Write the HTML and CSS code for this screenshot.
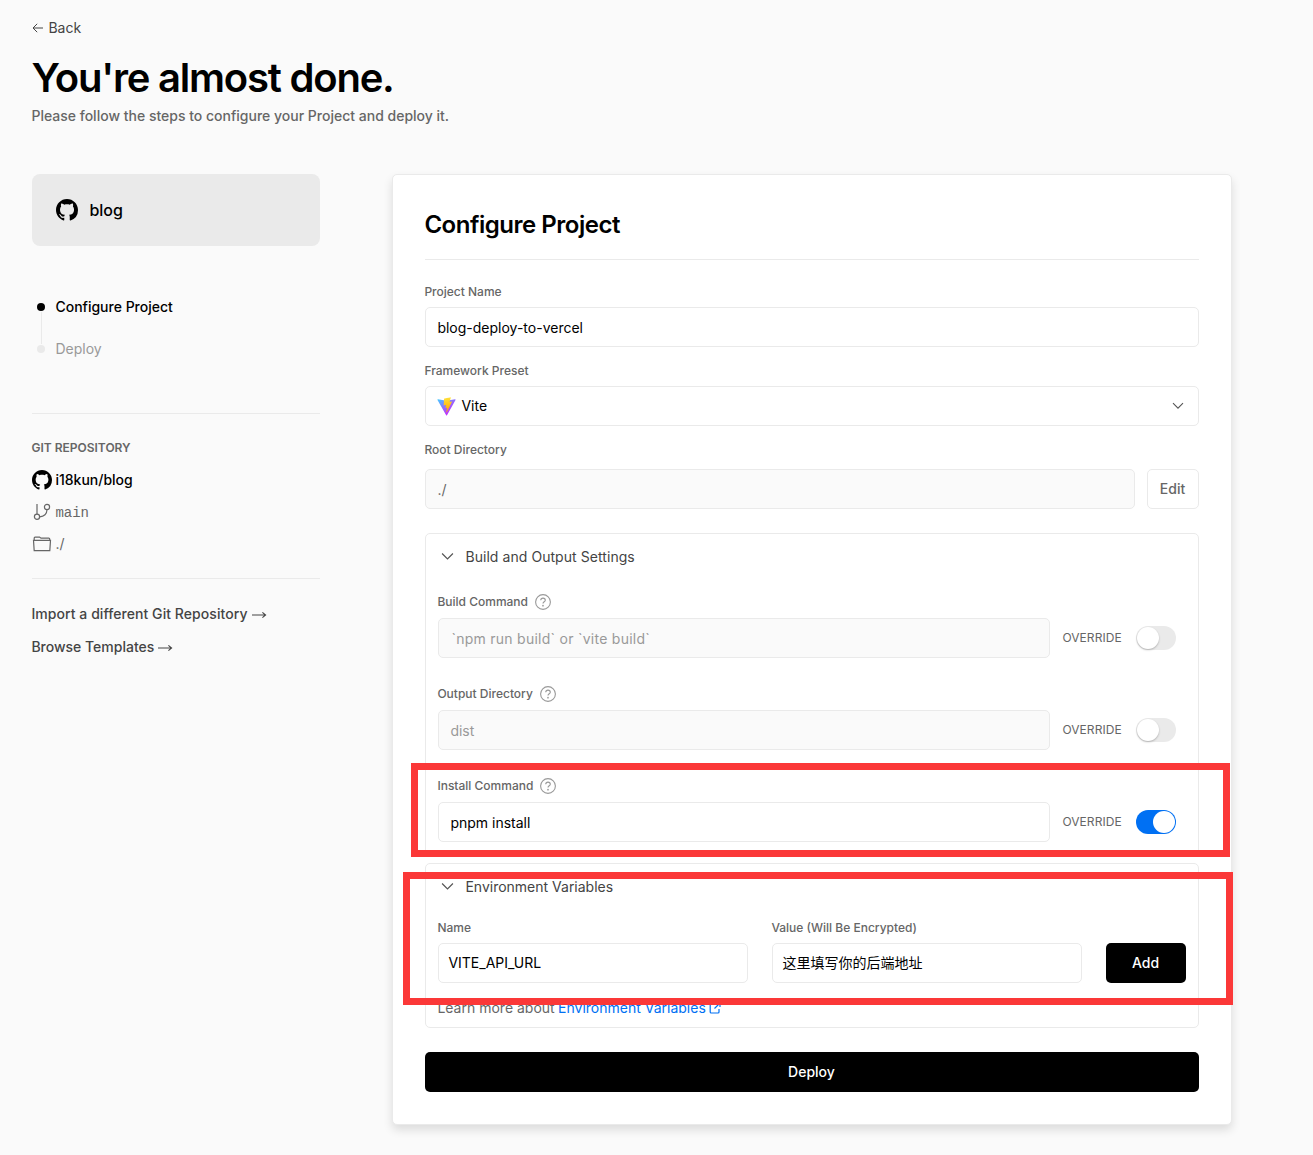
FILE: index.html
```html
<!DOCTYPE html>
<html lang="en">
<head>
<meta charset="utf-8">
<title>New Project</title>
<link rel="stylesheet" href="styles.css">
</head>
<body>
<svg class="defs" width="0" height="0">
  <symbol id="github" viewBox="0 0 16 16"><path fill="currentColor" fill-rule="evenodd" d="M8 0C3.58 0 0 3.58 0 8c0 3.54 2.29 6.53 5.47 7.59.4.07.55-.17.55-.38 0-.19-.01-.82-.01-1.49-2.01.37-2.53-.49-2.69-.94-.09-.23-.48-.94-.82-1.13-.28-.15-.68-.52-.01-.53.63-.01 1.08.58 1.23.82.72 1.21 1.87.87 2.33.66.07-.52.28-.87.51-1.07-1.78-.2-3.64-.89-3.64-3.95 0-.87.31-1.59.82-2.15-.08-.2-.36-1.02.08-2.12 0 0 .67-.21 2.2.82.64-.18 1.32-.27 2-.27s1.36.09 2 .27c1.53-1.04 2.2-.82 2.2-.82.44 1.1.16 1.92.08 2.12.51.56.82 1.27.82 2.15 0 3.07-1.87 3.75-3.65 3.95.29.25.54.73.54 1.48 0 1.07-.01 1.93-.01 2.2 0 .21.15.46.55.38A8.01 8.01 0 0 0 16 8c0-4.42-3.58-8-8-8z"/></symbol>
  <symbol id="chevron" viewBox="0 0 12 8"><path d="M1 1.2l5 5 5-5" fill="none" stroke="currentColor" stroke-width="1.1"/></symbol>
  <symbol id="arrow" viewBox="0 0 16 10"><path d="M1 5h13.400M11.400 2.300L14.600 5l-3.200 2.700" fill="none" stroke="currentColor" stroke-width="1.1"/></symbol>
  <symbol id="help" viewBox="0 0 16 16"><g fill="none" stroke="currentColor" stroke-width="1.1"><circle cx="8" cy="8" r="7.4"/><path d="M5.700 6.300c.1-1.500 1.100-2.200 2.300-2.200s2.300.8 2.300 2.100C10.300 7.800 8 7.700 8 9.500"/></g><circle cx="8" cy="11.700" r=".85" fill="currentColor"/></symbol>
</svg>
<main class="page">
  <header class="intro">
    <a class="back"><svg class="back-icon" viewBox="0 0 11 10"><path d="M11 5H1M5.200.8L1 5l4.200 4.200" fill="none" stroke="currentColor"/></svg><span>Back</span></a>
    <h1 class="title">You're almost done.</h1>
    <p class="lead">Please follow the steps to configure your Project and deploy it.</p>
  </header>
  <div class="columns">
    <aside class="sidebar">
      <div class="repo"><svg class="repo-icon"><use href="#github"/></svg><span>blog</span></div>
      <ol class="steps">
        <li class="step active"><i class="dot"></i><span>Configure Project</span></li>
        <li class="step"><i class="dot"></i><span>Deploy</span></li>
      </ol>
      <section class="git">
        <h3 class="git-title">GIT REPOSITORY</h3>
        <div class="git-row name"><svg class="git-icon"><use href="#github"/></svg><span>i18kun/blog</span></div>
        <div class="git-row mono"><svg class="git-icon" viewBox="0 0 20 20" fill="none" stroke="currentColor" stroke-width="1.200"><path d="M5 2v10.200M15 7.600c0 4.200-3 7-7.200 7.200"/><circle cx="5" cy="14.800" r="2.600"/><circle cx="15" cy="5" r="2.600"/></svg><span>main</span></div>
        <div class="git-row"><svg class="git-icon" viewBox="0 0 20 20" fill="none" stroke="currentColor" stroke-width="1.200"><path d="M2.200 16.700L1.500 6.300h17l-.7 10.400zM2.200 6.300V4q0-.9.900-.9h4.400l1.500 1.100h7.800q.9 0 .9.900v1.200"/></svg><span>./</span></div>
      </section>
      <nav class="links">
        <a class="import"><span>Import a different Git Repository</span><svg class="arrow"><use href="#arrow"/></svg></a>
        <a><span>Browse Templates</span><svg class="arrow"><use href="#arrow"/></svg></a>
      </nav>
    </aside>
    <section class="card">
      <h2 class="card-title">Configure Project</h2>
      <div class="label first">Project Name</div>
      <div class="input">blog-deploy-to-vercel</div>
      <div class="label">Framework Preset</div>
      <div class="input select">
        <svg class="vite" viewBox="0 0 410 404"><defs>
          <linearGradient id="va" x1="6" y1="33" x2="235" y2="344" gradientUnits="userSpaceOnUse"><stop stop-color="#41D1FF"/><stop offset="1" stop-color="#BD34FE"/></linearGradient>
          <linearGradient id="vb" x1="194.651" y1="8.818" x2="236.076" y2="292.989" gradientUnits="userSpaceOnUse"><stop stop-color="#FFEA83"/><stop offset=".083" stop-color="#FFDD35"/><stop offset="1" stop-color="#FFA800"/></linearGradient></defs>
          <path fill="url(#va)" d="M399.641 59.525L215.643 388.545c-3.799 6.793-13.559 6.833-17.415.073L10.582 59.556C6.381 52.190 12.680 43.267 21.028 44.759l184.195 32.924c1.175.21 2.378.208 3.553-.006l180.343-32.870c8.320-1.517 14.649 7.337 10.522 14.718z"/>
          <path fill="url(#vb)" d="M292.965 1.574L156.801 28.255c-2.238.439-3.911 2.330-4.045 4.607l-8.376 141.464c-.198 3.332 2.863 5.918 6.115 5.168l37.910-8.749c3.547-.818 6.752 2.306 6.023 5.873l-11.263 55.153c-.758 3.712 2.727 6.886 6.352 5.785l23.415-7.114c3.630-1.102 7.118 2.081 6.350 5.796l-17.899 86.633c-1.120 5.419 6.088 8.374 9.094 3.728l2.008-3.103 110.954-221.428c1.858-3.707-1.346-7.935-5.418-7.149l-39.022 7.531c-3.667.707-6.787-2.708-5.752-6.296l25.469-88.291c1.036-3.594-2.095-7.012-5.766-6.289z"/></svg>
        <span class="select-value">Vite</span>
        <svg class="chevron small"><use href="#chevron"/></svg>
      </div>
      <div class="label root-label">Root Directory</div>
      <div class="root"><div class="input disabled root-input">./</div><button class="edit">Edit</button></div>

      <section class="panel build">
        <div class="panel-head"><svg class="chevron"><use href="#chevron"/></svg><span>Build and Output Settings</span></div>
        <div class="sub-label">Build Command<svg class="help"><use href="#help"/></svg></div>
        <div class="override-row"><div class="input disabled placeholder tick">`npm run build` or `vite build`</div><span class="override">OVERRIDE</span><i class="toggle"></i></div>
        <div class="sub-label">Output Directory<svg class="help"><use href="#help"/></svg></div>
        <div class="override-row"><div class="input disabled placeholder">dist</div><span class="override">OVERRIDE</span><i class="toggle"></i></div>
        <div class="sub-label">Install Command<svg class="help"><use href="#help"/></svg></div>
        <div class="override-row"><div class="input">pnpm install</div><span class="override">OVERRIDE</span><i class="toggle on"></i></div>
      </section>

      <section class="panel env">
        <div class="panel-head"><svg class="chevron"><use href="#chevron"/></svg><span>Environment Variables</span></div>
        <div class="env-row">
          <div class="env-field"><div class="env-label">Name</div><div class="input env-input">VITE_API_URL</div></div>
          <div class="env-field"><div class="env-label">Value (Will Be Encrypted)</div><div class="input env-input">这里填写你的后端地址</div></div>
          <button class="add">Add</button>
        </div>
        <p class="learn"><span>Learn more about</span><a>Environment Variables<svg class="external" viewBox="0 0 12 12"><path d="M5 2H2.200Q1.200 2 1.200 3v7q0 1 1 1H9q1 0 1-1V7M7 1h4v4M11 1L5.500 6.500" fill="none" stroke="currentColor" stroke-width="1.200"/></svg></a></p>
      </section>
      <button class="deploy">Deploy</button>
    </section>
  </div>
  <div class="mark mark-install"></div>
  <div class="mark mark-env"></div>
</main>
</body>
</html>
```
FILE: styles.css
```css
* { box-sizing: border-box; }
body {
  margin: 0;
  background: #fafafa;
  color: #000;
  font: 14px/20px Inter, "Noto Sans CJK SC", sans-serif;
  text-indent: -.6px;
}
h1, h2, h3, p, ol { margin: 0; padding: 0; font-weight: inherit; }
svg { display: block; flex: none; }
i { display: block; flex: none; }
button { font: inherit; margin: 0; padding: 0; border: 0; text-indent: -1px; }
.defs { position: absolute; }

.page { position: relative; height: 1155px; padding: 18px 0 0 32px; overflow: hidden; }
.intro { height: 156px; }
.back { display: flex; align-items: center; gap: 6px; color: #444; }
.back-icon { width: 11px; height: 10px; }
.title { margin-top: 16px; font-size: 40px; line-height: 48px; font-weight: 600; letter-spacing: -1.22px; }
.lead { margin-top: 4px; color: #666; font-weight: 500; }
.columns { display: flex; align-items: flex-start; gap: 72px; }

.sidebar { width: 288px; }
.repo { display: flex; align-items: center; gap: 12px; height: 72px; padding-left: 24px; border-radius: 8px; background: #eaeaea; font-size: 16px; font-weight: 500; }
.repo-icon { width: 22px; height: 22px; }
.steps { list-style: none; height: 168px; padding: 51px 0 0 5px; border-bottom: 1px solid #eaeaea; }
.step { position: relative; display: flex; align-items: center; gap: 11px; height: 20px; margin-bottom: 22px; color: #999; }
.step.active { color: #000; font-weight: 500; }
.dot { width: 8px; height: 8px; border-radius: 50%; background: #eaeaea; }
.active .dot { background: #000; }
.step.active::after { content: ""; position: absolute; left: 4px; top: 15px; width: 1px; height: 32px; background: #eaeaea; }
.git { height: 165px; padding-top: 24px; border-bottom: 1px solid #eaeaea; color: #666; }
.git-title { margin-bottom: 12px; font-size: 12px; font-weight: 600; }
.git-row { display: flex; align-items: center; gap: 4px; height: 20px; margin-bottom: 12px; }
.git-row.name { color: #000; font-weight: 500; }
.git-row.mono { font-family: "Liberation Mono", monospace; }
.git-row.mono span { padding-top: 2px; }
.git-icon { width: 20px; height: 20px; }
.links { display: flex; flex-direction: column; gap: 13px; padding-top: 25px; color: #444; font-weight: 500; }
.links a { display: flex; align-items: center; gap: 3px; }
.links .import { letter-spacing: .06px; }
.arrow { width: 16px; height: 10px; margin-top: 2px; }

.card { width: 840px; height: 951px; padding: 32px; border: 1px solid #eaeaea; border-radius: 5px; background: #fff; box-shadow: 0 5px 10px rgba(0, 0, 0, .12); }
.card-title { height: 53px; border-bottom: 1px solid #eaeaea; font-size: 24px; line-height: 36px; font-weight: 600; letter-spacing: -.48px; }
.label { height: 39px; padding-top: 14px; color: #666; font-size: 12px; font-weight: 500; }
.label.first { height: 47px; padding-top: 22px; }
.root-label { height: 43px; }
.input { display: flex; align-items: center; height: 40px; padding: 1px 12px 0; border: 1px solid #eaeaea; border-radius: 5px; background: #fff; }
.input.disabled { background: #fafafa; color: #666; }
.input.placeholder { color: #999; }
.input.tick { padding-left: 13px; letter-spacing: .26px; }
.select { padding-top: 0; }
.vite { width: 19px; height: 19px; margin: 1px 0 0 -1px; }
.select-value { flex: 1; margin-left: 6px; }
.chevron { width: 13px; height: 9px; color: #555; }
.chevron.small { width: 12px; height: 8px; margin-right: 2px; }
.root { display: flex; gap: 12px; }
.root-input { flex: 1; }
.edit { width: 52px; height: 40px; border: 1px solid #eaeaea; border-radius: 5px; background: #fff; color: #666; font-weight: 500; }

.panel { border: 1px solid #eaeaea; border-radius: 5px; padding: 0 12px; }
.build { height: 322px; margin-top: 24px; }
.env { height: 165px; margin-top: 8px; }
.panel-head { display: flex; align-items: center; gap: 12px; height: 46px; padding-left: 3px; color: #444; }
.build .panel-head { letter-spacing: .06px; }
.panel-head .chevron { margin-top: -1px; }
.sub-label { display: flex; align-items: center; gap: 7px; height: 52px; padding-top: 20px; color: #666; font-size: 12px; font-weight: 500; }
.panel-head + .sub-label { height: 38px; padding-top: 6px; }
.help { width: 16px; height: 16px; color: #999; }
.override-row { display: flex; align-items: center; }
.override-row .input { width: 612px; }
.override { width: 86px; padding-left: 13px; color: #666; font-size: 12px; letter-spacing: .06px; }
.toggle { width: 40px; height: 24px; padding: 1px; border-radius: 12px; background: #eaeaea; }
.toggle::before { content: ""; display: block; width: 22px; height: 22px; border-radius: 50%; background: #fff; box-shadow: 0 1px 2px rgba(0, 0, 0, .25); }
.toggle.on { background: #0070f3; }
.toggle.on::before { margin-left: 16px; box-shadow: none; }
.env-row { display: flex; align-items: flex-end; gap: 24px; height: 73px; }
.env-field { width: 310px; }
.env-label { height: 25px; color: #666; font-size: 12px; font-weight: 500; }
.env-input { padding: 0 10px; }
.add { width: 80px; height: 40px; border-radius: 5px; background: #000; color: #fff; font-weight: 500; }
.learn { display: flex; gap: 4px; margin-top: 15px; color: #666; }
.learn a { display: flex; align-items: center; gap: 3px; color: #0070f3; }
.external { width: 12px; height: 12px; }
.deploy { display: block; width: 100%; height: 40px; margin-top: 24px; border-radius: 5px; background: #000; color: #fff; font-weight: 500; }

/* Annotation frames laid over the form */
.mark { position: absolute; border: 7px solid #fb3838; }
.mark-install { left: 411px; top: 763px; width: 819px; height: 94px; }
.mark-env { left: 403px; top: 872px; width: 830px; height: 133px; }
```
